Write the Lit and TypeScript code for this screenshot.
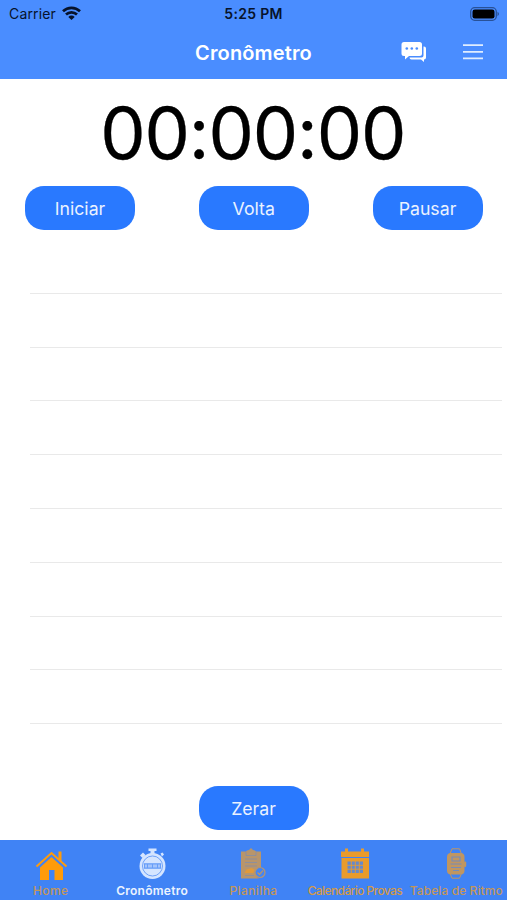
import { LitElement, html, css, svg } from "lit";
import { customElement, property } from "lit/decorators.js";

const icons = {
  home: svg`<path d="M3.500 17.500 18.500 4 33.500 17.500" fill="none" stroke="currentColor" stroke-width="2"/><path d="M25.500 2.500h3v10.300L25.500 10z"/><path d="M7 18.500 18.500 8 30 18.500V31h-8.500V21h-5.500v10H7z"/>`,
  chrono: svg`<path d="M13.500-.5h8V2h-2v3h-4V2h-2zM5 6.500l3-3L10.500 6 7.500 9zM25.500 4.500l2-1 1.500 2-2 2z"/><circle cx="17.500" cy="17" r="13"/><circle cx="17.500" cy="17" r="10" fill="none" stroke="#4385f5" stroke-width="1" opacity=".7"/><path d="M9 14.200h17v5.600H9z" fill="#4385f5" opacity=".75"/><path d="M11 15.500v3m3-3v3m2-3v3m3-3v3m2-3v3m3-3v3" stroke="currentColor" stroke-width="1.100"/>`,
  sheet: svg`<path d="M5 2.500h5c.5-1 1.500-1 3-1.500L15-1l2 2c1.500.5 2.500.5 3 1.500h5V18a6 6 0 0 0-2 11.500H5z"/><path d="M10 3v3.500h10V3M9 10h12M9 13.500h12M9 17h12M9 26.500h9" fill="none" stroke="#4385f5" stroke-width=".9" opacity=".4"/><path d="M8.500 24l2-3.500 5-1.500 3 1.500-1 3.500z" fill="#e19a3b"/><circle cx="24" cy="23.500" r="5" fill="#4385f5" stroke="currentColor" stroke-width="1.200"/><path d="M21.500 23.500l2 2 3.500-4" fill="none" stroke="currentColor" stroke-width="1.200"/>`,
  calendar: svg`<path d="M4 2.500h4V-.5h3v3h13v-3h3v3h5V8H4zM4.500 9h27.500v20.500h-27.500z"/><path d="M10.500 12.500h15.500v11.500H10.500z" fill="#4385f5" opacity=".8"/><path d="M10 16.300h16.500M10 20.200h16.500M14.300 12v12.500m4-12.500v12.500m4-12.500v12.500" fill="none" stroke="currentColor" stroke-width=".9"/>`,
  watch: svg`<path d="M11 5 13-.2h7.500l2 5.200M11 24.500l2 4.700h7.500l2-4.700" fill="none" stroke="currentColor" stroke-width="1"/><rect x="8" y="4" width="17.500" height="21.500" rx="4"/><rect x="25" y="12.500" width="2.200" height="5.500" rx="1"/><path d="M13 8h8v4h-8zM11.500 15h11M12 18.500h10M14 21.500h6" fill="none" stroke="#4385f5" stroke-width="1.200" opacity=".6"/>`,
};

const tabs = [
  { label: "Home", icon: icons.home, kind: "home" },
  { label: "Cronômetro", icon: icons.chrono, kind: "chrono" },
  { label: "Planilha", icon: icons.sheet, kind: "sheet" },
  { label: "Calendário Provas", icon: icons.calendar, kind: "calendar" },
  { label: "Tabela de Ritmo", icon: icons.watch, kind: "watch" },
];

@customElement("pill-button")
class PillButton extends LitElement {
  @property() label = "";
  static styles = css`
    :host { display: block; width: 110px; height: 44px; }
    button {
      width: 100%; height: 100%; padding: 1px 0 0; border: 0; border-radius: 19px;
      background: #2979ff; color: #eaf2ff;
      font: 400 17.7px/43px Inter, sans-serif;
    }
  `;
  render() { return html`<button>${this.label}</button>`; }
}

@customElement("app-root")
class AppRoot extends LitElement {
  static styles = css`
    :host {
      display: flex; flex-direction: column; width: 507px; height: 900px;
      overflow: hidden; background: #fff; font-family: Inter, sans-serif;
    }
    header { height: 79px; flex: none; background: #4a8dff; color: #fff; }
    .status {
      height: 27px; display: grid; grid-template-columns: 1fr auto 1fr;
      align-items: center; color: #07132b; font-size: 14px; line-height: 27px;
    }
    .carrier { display: flex; align-items: center; gap: 6px; padding-left: 9px; letter-spacing: .15px; }
    .carrier svg { margin-top: -2px; }
    .carrier span { line-height: 26px; margin-top: -1px; }
    .clock { font-weight: 600; font-size: 14px; line-height: 28px; letter-spacing: .3px; }
    .battery { justify-self: end; margin: -1px 7px 0 0; }
    .nav { height: 51px; display: grid; grid-template-columns: 1fr auto 1fr; align-items: center; }
    h1 { grid-column: 2; margin: 0; font-size: 20px; font-weight: 600; line-height: 50px; letter-spacing: .15px; }
    .actions { display: flex; align-items: center; justify-content: flex-end; gap: 36px; padding-right: 24.500px; }
    .actions svg { margin-top: -1px; }
    svg { display: block; overflow: visible; fill: currentColor; }
    .timer {
      height: 107px; flex: none; display: flex; justify-content: center;
      font-size: 72px; line-height: 107px; color: #000; white-space: nowrap;
      letter-spacing: -1.100px; text-indent: -1.500px; -webkit-text-stroke: .3px #000;
    }
    .buttons { display: flex; flex: none; justify-content: space-between; padding: 0 24.500px 0 25px; }
    .laps { flex: none; margin: 10px 5px 0 30px; }
    .lap { box-sizing: border-box; height: 53.800px; border-bottom: 1.500px solid #e9e9e9; }
    .reset { display: flex; justify-content: center; margin-top: 62px; }
    footer {
      margin-top: auto; height: 60px; flex: none; background: #4083f5;
      display: grid; grid-template-columns: repeat(5, 1fr); color: #b99669;
    }
    .tab { display: flex; flex-direction: column; align-items: center; padding-top: 9px; min-width: 0; }
    .label { font-size: 12px; font-weight: 500; line-height: 16px; margin-top: 2px; white-space: nowrap; color: #c3965a; }
    .home { color: #ff9b0a; }
    .chrono { color: #d5e5ff; }
    .chrono .label { color: #eaf3ff; font-weight: 600; letter-spacing: .25px; }
    .sheet { color: #b8956b; }
    .sheet .label { letter-spacing: .4px; }
    .calendar { color: #e99b2c; }
    .calendar .label { color: #d39a48; letter-spacing: -.600px; }
    .watch { color: #c09661; }
    .home .label { letter-spacing: .4px; }
    .watch .label { letter-spacing: .1px; }
  `;

  render() {
    return html`
      <header>
        <div class="status">
          <div class="carrier"><span>Carrier</span>
            <svg width="19" height="14" viewBox="0 0 19 14"><g fill="none" stroke="currentColor" stroke-width="2.700"><path d="M1 5.200a12.300 12.300 0 0 1 17 0"/><path d="M4 8.600a8 8 0 0 1 11 0"/></g><path d="M6.300 10.900a4.600 4.600 0 0 1 6.400 0L9.500 14z"/></svg>
          </div>
          <span class="clock">5:25 PM</span>
          <svg class="battery" width="30" height="14" viewBox="0 0 30 14"><rect x=".7" y=".7" width="25.600" height="12.600" rx="4" fill="none" stroke="#285197" stroke-width="1.300"/><rect x="2.500" y="2.500" width="22" height="9" rx="2.300" fill="#000"/><path d="M27.500 4.800q3 2.200 0 4.400z" fill="#285197"/></svg>
        </div>
        <div class="nav">
          <h1>Cronômetro</h1>
          <div class="actions">
            <svg width="26" height="20" viewBox="0 0 26 20"><path d="M3 0h15.500Q21 0 21 2.500v9q0 2.500-2.500 2.500H8l-4 3.500V14H3Q.5 14 .5 11.500v-9Q.5 0 3 0z"/><path d="M22.500 4.500h.5q2 0 2 2v9q0 2-2 2V20L20 17.500h-9.500q-2 0-2-2h12q2 0 2-2z"/><g fill="#4a8dff"><circle cx="5.800" cy="6.500" r="1.300"/><circle cx="10.800" cy="6.500" r="1.300"/><circle cx="15.800" cy="6.500" r="1.300"/></g></svg>
            <svg width="20" height="16" viewBox="0 0 20 16"><path d="M0 1.200h20M0 7.800h20M0 14.300h20" stroke="#e0edff" stroke-width="1.800"/></svg>
          </div>
        </div>
      </header>
      <div class="timer">00:00:00</div>
      <div class="buttons">
        <pill-button label="Iniciar"></pill-button>
        <pill-button label="Volta"></pill-button>
        <pill-button label="Pausar"></pill-button>
      </div>
      <div class="laps">${Array.from({ length: 9 }, () => html`<div class="lap"></div>`)}</div>
      <div class="reset"><pill-button label="Zerar"></pill-button></div>
      <footer>
        ${tabs.map((t) => html`<div class="tab ${t.kind}">
          <svg width="35" height="32" viewBox="0 0 35 32">${t.icon}</svg>
          <span class="label">${t.label}</span>
        </div>`)}
      </footer>
    `;
  }
}
